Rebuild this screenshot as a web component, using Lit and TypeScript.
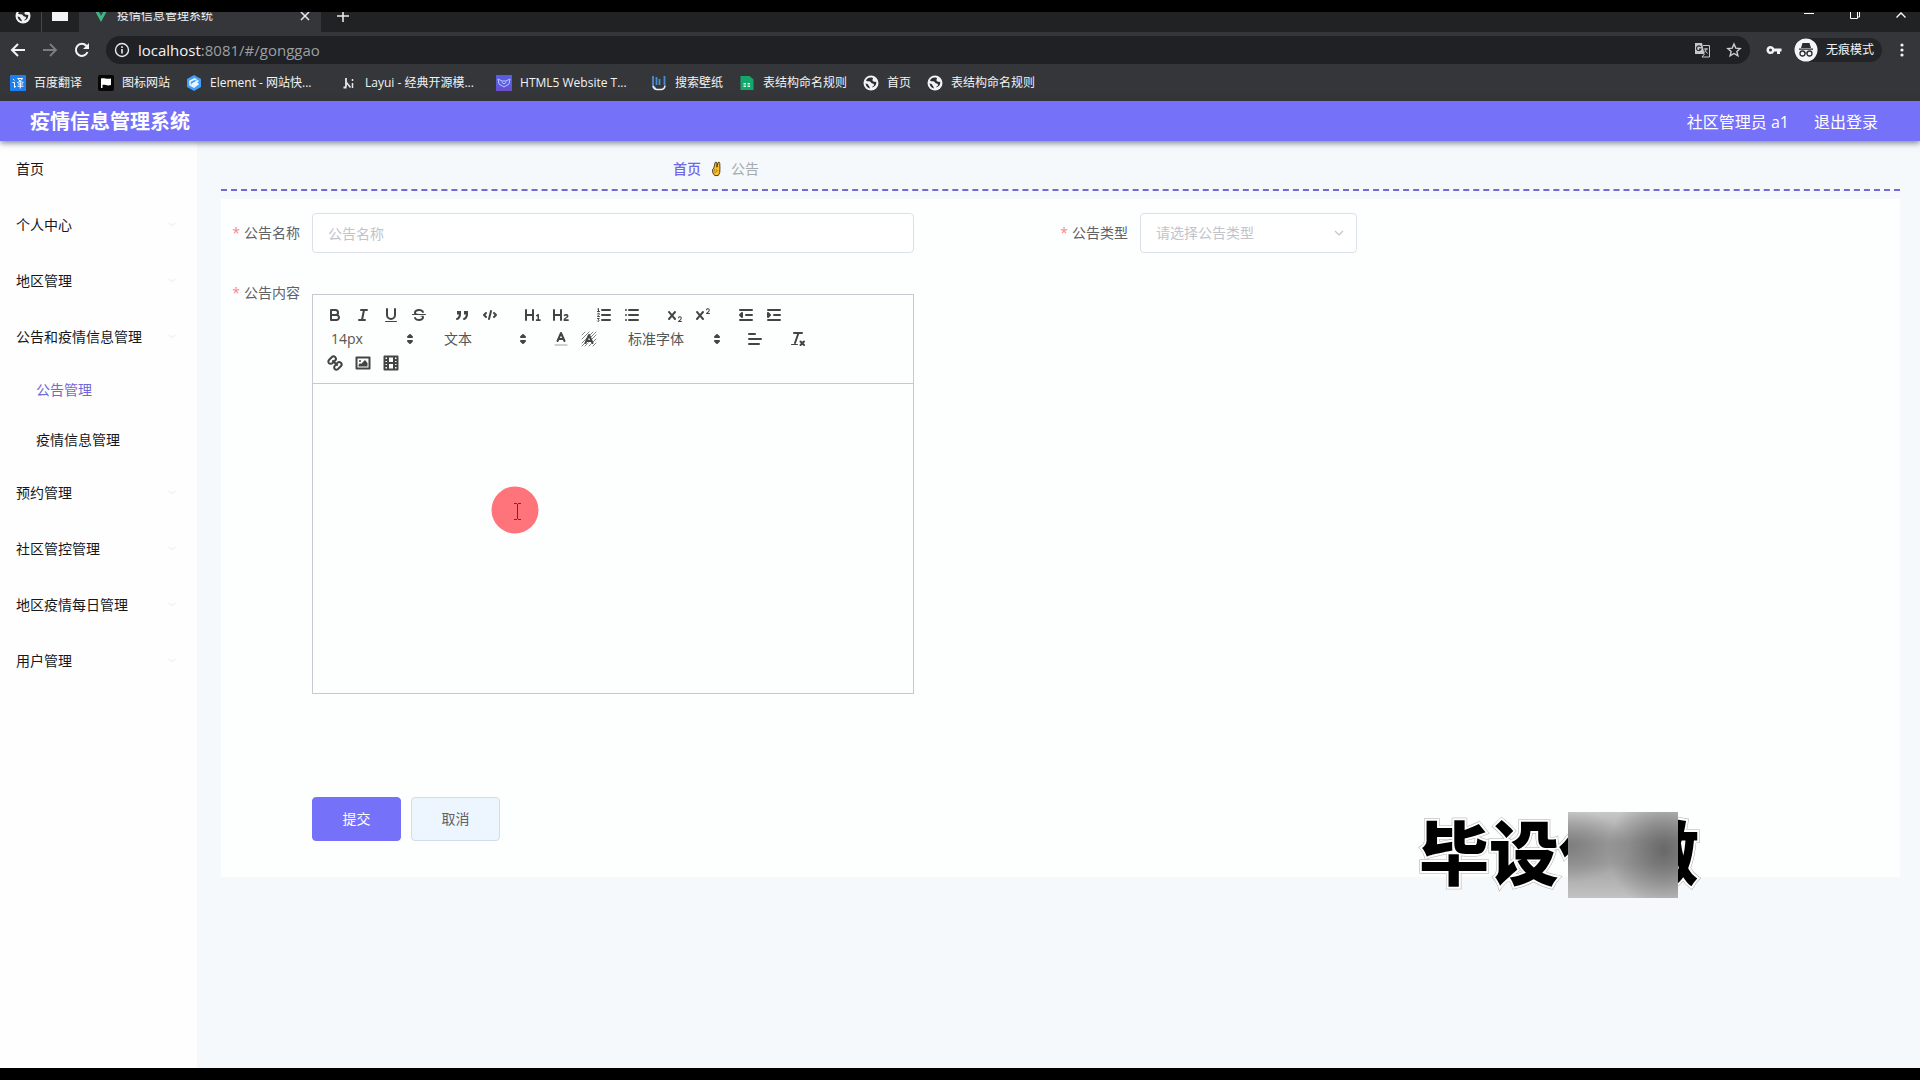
import { LitElement, html, svg, css, nothing } from "lit";
import { customElement, property } from "lit/decorators.js";

const glyphs: Record<string, unknown> = {
  bold: svg`<path class="s" d="M5,4H9.5A2.5,2.5,0,0,1,12,6.5v0A2.5,2.5,0,0,1,9.5,9H5A0,0,0,0,1,5,9V4Z"/><path class="s" d="M5,9h5.5A2.5,2.5,0,0,1,13,11.5v0A2.5,2.5,0,0,1,10.5,14H5V9Z"/>`,
  italic: svg`<path class="s" d="M7,4H13M5,14H11M8,14L10,4"/>`,
  underline: svg`<path class="s" d="M5,3V9a4.012,4.012,0,0,0,4,4H9a4.012,4.012,0,0,0,4-4V3"/><rect class="f" height="1" rx="0.5" width="12" x="3" y="15"/>`,
  strike: svg`<path class="s t" d="M15.5,8.5H2.5"/><path class="f" d="M9.007,8C6.542,7.791,6,7.519,6,6.5,6,5.792,7.283,5,9,5c1.571,0,2.765.679,2.969,1.309a1,1,0,0,0,1.9-.617C13.356,4.106,11.354,3,9,3,6.2,3,4,4.538,4,6.5a3.2,3.2,0,0,0,.5,1.843Z"/><path class="f" d="M8.984,10C11.457,10.208,12,10.479,12,11.5c0,0.708-1.283,1.5-3,1.5-1.571,0-2.765-.679-2.969-1.309a1,1,0,1,0-1.9.617C4.644,13.894,6.646,15,9,15c2.8,0,5-1.538,5-3.5a3.2,3.2,0,0,0-.5-1.843Z"/>`,
  quote: svg`<rect class="f" height="3" width="3" x="4" y="5"/><rect class="f" height="3" width="3" x="11" y="5"/><path class="f s" d="M7,8c0,4.031-3,5-3,5"/><path class="f s" d="M14,8c0,4.031-3,5-3,5"/><path class="f" d="M4,5h4v3.500H4zM11,5h4v3.500h-4z"/>`,
  code: svg`<path class="s" d="M5,7L3,9L5,11M13,7L15,9L13,11M10,5L8,13"/>`,
  h1: svg`<path class="f" d="M10,4V14a1,1,0,0,1-2,0V10H3v4a1,1,0,0,1-2,0V4A1,1,0,0,1,3,4V8H8V4a1,1,0,0,1,2,0Zm6.068,9.209H14.980V8.594a.543.543,0,0,0-.605-.600h-.539a.821.821,0,0,0-.550.200l-1.122.935a.547.547,0,0,0-.011.847l.319.340a.547.547,0,0,0,.847.011l.200-.200V13.209H12.450a.544.544,0,0,0-.605.605v.583a.544.544,0,0,0,.605.600h3.618a.544.544,0,0,0,.605-.600v-.583A.544.544,0,0,0,16.068,13.209Z"/>`,
  h2: svg`<path class="f" d="M16.740,13.814v.583a.544.544,0,0,1-.605.600H12.132c-.429,0-.627-.231-.627-.693,0-2.640,3.190-2.881,3.190-4.047a.721.721,0,0,0-.800-.715,1.021,1.021,0,0,0-.803.452c-.242.308-.484.352-.847.066l-.363-.286c-.352-.264-.407-.517-.100-.869A2.724,2.724,0,0,1,14.058,8a2.043,2.043,0,0,1,2.387,2.046c0,1.882-2.816,2.256-2.937,3.168h2.629A.544.544,0,0,1,16.740,13.814ZM9,3A.99974.99974,0,0,0,8,4V8H3V4A1,1,0,0,0,1,4V14a1,1,0,0,0,2,0V10H8v4a1,1,0,0,0,2,0V4A.99974.99974,0,0,0,9,3Z"/>`,
  ol: svg`<path class="s" d="M7,4H15M7,9H15M7,14H15"/><path class="s t" d="M2.500,5.500H4.500M3.500,5.500V2.500L2.700,3"/><path class="s t" d="M2.500,8a1,.8,0,0,1,2,0c0,1-2,1.300-2,2.500h2"/><path class="s t" d="M2.500,12.500h1.800l-1,1.200a.9.900,0,1,1-1,1.300"/>`,
  ul: svg`<path class="s" d="M6,4H15M6,9H15M6,14H15M3,4H3M3,9H3M3,14H3"/>`,
  sub: svg`<path class="f" d="M15.500,15H13.861a3.858,3.858,0,0,0,1.914-2.975,1.800,1.800,0,0,0-1.600-1.751A1.921,1.921,0,0,0,12.021,11.700a.50013.500,0,1,0,.957.291.914.914,0,0,1,1.053-.725.810.810,0,0,1,.744.762c0,1.076-1.169,1.867-1.920,2.410A1.457,1.457,0,0,0,12,15.500a.5.500,0,0,0,.5.500h3a.5.500,0,0,0,0-1Z"/><path class="f" d="M9.650,5.241a1,1,0,0,0-1.409.108L6,7.964,3.759,5.349A1,1,0,0,0,2.192,6.591L4.683,9.500,2.241,12.349A1,1,0,0,0,3.759,13.651L6,11.036,8.241,13.651a1,1,0,1,0,1.518-1.300L7.317,9.500,9.759,6.651A1,1,0,0,0,9.650,5.241Z"/>`,
  sup: svg`<path class="f" d="M15.500,7H13.861a3.858,3.858,0,0,0,1.914-2.975,1.800,1.800,0,0,0-1.600-1.751A1.921,1.921,0,0,0,12.021,3.700a.5.500,0,1,0,.957.291.917.917,0,0,1,1.053-.725.810.810,0,0,1,.744.762c0,1.077-1.164,1.925-1.934,2.486A1.423,1.423,0,0,0,12,7.500a.5.500,0,0,0,.5.500h3a.5.500,0,0,0,0-1Z"/><path class="f" d="M9.650,5.241a1,1,0,0,0-1.409.108L6,7.964,3.759,5.349A1,1,0,0,0,2.192,6.591L4.683,9.500,2.241,12.349A1,1,0,0,0,3.759,13.651L6,11.036,8.241,13.651a1,1,0,1,0,1.518-1.300L7.317,9.500,9.759,6.651A1,1,0,0,0,9.650,5.241Z"/>`,
  outdent: svg`<path class="s" d="M3,14H15M3,4H15M9,9H15"/><path class="f s" d="M5,7V11L3,9Z"/>`,
  indent: svg`<path class="s" d="M3,14H15M3,4H15M9,9H15"/><path class="f s" d="M3,7V11L5,9Z"/>`,
  color: svg`<path class="s t" opacity=".5" d="M3,15H15"/><path class="s" d="M5.500,11L9,3L12.500,11M11.630,9H6.380"/>`,
  background: svg`<path class="s t" d="M2,5L5,2M2,9L9,2M2,13L13,2M2,16L16,2M5,16L16,5M9,16L16,9M13,16L16,13" opacity=".65"/><path d="M5,13.500L9,4.500L13,13.500Z" fill="#fff" opacity=".5"/><path class="s" d="M5.500,13L9,5L12.500,13M11.630,11H6.380"/>`,
  align: svg`<path class="s" d="M3,9H15M3,14H13M3,4H9"/>`,
  clean: svg`<path class="s" d="M5,3H13M6,13L9.500,3M11.500,11.500L15,15M15,11.500L11.500,15"/><rect class="f" height="1" rx=".5" width="7" x="2" y="14"/>`,
  link: svg`<g transform="rotate(90 9 9)"><path class="s" d="M7,11L11,7"/><path class="s" d="M8.900,11.440a2.476,2.476,0,0,1,.36,3.540,2.476,2.476,0,0,1-3.540-.15L3.200,12.300a2.500,2.500,0,0,1-.1-3.500,2.500,2.500,0,0,1,3.500.1Z"/><path class="s" d="M11.440,8.900a2.476,2.476,0,0,0,3.540.36,2.476,2.476,0,0,0-.15-3.540L12.300,3.200a2.500,2.500,0,0,0-3.500-.1,2.500,2.500,0,0,0,.1,3.500Z"/></g>`,
  image: svg`<rect class="s" height="11" width="13" x="2.500" y="3.500"/><circle class="f" cx="6" cy="7" r="1"/><path class="f" d="M4.500,12.500V11L6,9L7,10L11,6L13.500,9V12.500Z"/>`,
  video: svg`<rect class="s" height="13" width="13" x="2.500" y="2.500"/><path class="s" d="M6,3V15M12,3V15M6,9H12"/><path class="s" d="M3,6H5M3,9H5M3,12H5M13,6H15M13,9H15M13,12H15" stroke-width="1"/>`,
  sort: svg`<path class="f s" d="M7,11L9,13L11,11ZM7,7L9,5L11,7Z"/>`,
};

const globe = svg`<circle cx="8" cy="8" r="7.500" fill="#f1f3f4"/><path fill="#2c2d30" d="M3 5.500C5 7 7.500 6 8 7.500s2.500.5 3 2-1.500 1.500-2 3c2.500-.5 4.500-2.500 4.300-5.500C11.500 6.500 10 7 9.500 5.500S11 4 9.500 2.700C6.500 2 4 3 3 5.500ZM2.500 8.500c.5 2.500 2 4.300 4.300 4.900C7 11.500 5.500 11 5 9.500 4.300 8.500 3.500 8.800 2.500 8.500Z"/>`;

const favicons: Record<string, unknown> = {
  globe,
  translate: svg`<rect width="16" height="16" rx="1" fill="#1e7ff0"/><path d="M3 4l1.500 1.500M2.500 7.500h2v5l1.500-1.300M7.500 3.500h5c-1 2-3 3.500-5.300 4M8 3.500c1 2 3 3.500 5.500 4M10.300 7v6.500M8 9h5M7.500 11.200h6" stroke="#fff" fill="none"/>`,
  flag: svg`<rect width="16" height="16" rx="2" fill="#070707"/><path d="M3 13V3.500c3-1 5 1 10 0v6.500c-4 1.300-6-.7-8.500 0v3Z" fill="#fff"/>`,
  element: svg`<path d="M8 0l7 4v8l-7 4-7-4V4Z" fill="#409eff"/><path d="M12.500 5.500L6.500 9v1.500l5-3M12.500 8.500L8 12 4 9.700V6.300L8.500 4l2 1" stroke="#e9f5ff" stroke-width="1.600" fill="none"/>`,
  layui: svg`<path d="M5 3v8.500M2.500 12.500h3" stroke="#e8e8e8" stroke-width="1.800" fill="none"/><path d="M5.500 7.500l4 5M11.500 8v5M11.500 4v2" stroke="#e8e8e8" stroke-width="1.500"/>`,
  html5: svg`<rect width="16" height="16" fill="#5a5be0"/><path d="M0 12h16v4H0Z" fill="#6d50cf"/><path d="M2 4l4 2h4l4-2-1 5-5 3-5-3ZM5.500 7l2.500 2 2.500-2" fill="none" stroke="#c0c8ff"/>`,
  wallpaper: svg`<path d="M2 1v9a3 3 0 0 0 3 3M5.500 2v8M8.500 4v6M13.500 1v9" stroke="#4c8dd0" stroke-width="1.800" fill="none"/><path d="M2 11q1 3.500 4 3.500h4q3.500 0 4-4" stroke="#e9f3ff" stroke-width="1.600" fill="none"/>`,
  sheet: svg`<path d="M1.500 1h9l4 3.500V15h-13Z" fill="#14a76c"/><path d="M4.500 8h2.500v1.500H4.500ZM8.500 8H11v1.500H8.500ZM4.500 10.500h2.500V12H4.500ZM8.500 10.500H11V12H8.500Z" fill="#d6f5e6"/>`,
};

@customElement("browser-chrome")
export class BrowserChrome extends LitElement {
  static styles = css`
    :host { display: block; background: #353639; color: #f1f3f4; font: 12px/16px "Open Sans", "Noto Sans CJK SC", sans-serif; }
    svg { display: block; flex: none; }
    button { display: block; border: 0; padding: 0; margin: 0; background: none; color: inherit; }
    .strip { display: flex; height: 20px; background: #212224; overflow: hidden; }
    .strip > * { box-sizing: border-box; height: 20px; padding-bottom: 12px; display: flex; align-items: center; }
    .pins { width: 79px; padding-left: 15px; gap: 10px; }
    .bar { width: 1px; height: 40px; background: #46474a; }
    .tab { width: 242px; padding-left: 14px; padding-right: 10px; gap: 8px; background: #353639; }
    .tab-title { flex: 1; }
    .new { padding-left: 16px; }
    .win { margin-left: auto; padding-right: 12px; gap: 32px; }
    .tools { display: flex; align-items: center; height: 36px; padding: 0 10px; }
    .nav { display: flex; gap: 16px; width: 96px; }
    .omni { flex: 1; display: flex; align-items: center; height: 28px; border-radius: 14px; background: #202124; padding: 0 8px; gap: 8px; }
    .url { flex: 1; font-size: 15px; line-height: 20px; color: #9aa0a6; outline: none; }
    .host { color: #f1f3f4; }
    .omni .star { margin: 0 0 0 8px; }
    .key { margin: 0 12px 0 16px; }
    .incog { display: flex; align-items: center; gap: 8px; height: 24px; border-radius: 12px; background: #232427; padding-right: 8px; }
    .dots { margin-left: 12px; }
    .marks { display: flex; gap: 16px; height: 33px; padding: 0 10px 4px; box-sizing: border-box; align-items: center; }
    .mark { display: flex; align-items: center; gap: 8px; color: inherit; text-decoration: none; white-space: nowrap; }
    .cut { width: 115px; }
  `;

  private marks: [string, string, boolean][] = [
    ["translate", "百度翻译", false],
    ["flag", "图标网站", false],
    ["element", "Element - 网站快...", true],
    ["layui", "Layui - 经典开源模...", true],
    ["html5", "HTML5 Website T...", true],
    ["wallpaper", "搜索壁纸", false],
    ["sheet", "表结构命名规则", false],
    ["globe", "首页", false],
    ["globe", "表结构命名规则", false],
  ];

  render() {
    return html`
      <div class="strip">
        <div class="pins">
          <svg width="16" height="16" viewBox="0 0 16 16">${globe}</svg>
          <span class="bar"></span>
          <svg width="16" height="16" viewBox="0 0 16 16"><path d="M0 1h16v12H0Z" fill="#f4f4f4"/></svg>
        </div>
        <div class="tab">
          <svg width="16" height="16" viewBox="0 0 16 16"><path d="M1 1h4l3 5 3-5h4L8 14Z" fill="#41b883"/><path d="M4 1h2.500L8 3.500 9.500 1H12L8 8Z" fill="#34495e"/></svg>
          <span class="tab-title">疫情信息管理系统</span>
          <button aria-label="关闭标签页"><svg width="12" height="12" viewBox="0 0 12 12"><path d="M2 2l8 8M10 2l-8 8" stroke="#e8eaed" stroke-width="1.500"/></svg></button>
        </div>
        <div class="new"><button aria-label="新标签页"><svg width="12" height="12" viewBox="0 0 12 12"><path d="M6 0v12M0 6h12" stroke="#e8eaed" stroke-width="1.600"/></svg></button></div>
        <div class="win">
          <button aria-label="最小化"><svg width="14" height="14" viewBox="0 0 14 14"><path d="M2 4.500h10" stroke="#fff"/></svg></button>
          <button aria-label="还原"><svg width="14" height="14" viewBox="0 0 14 14"><path d="M2.500 2.500h7v7h-7ZM5 .5h6.500V8h-2" stroke="#fff" fill="none"/></svg></button>
          <button aria-label="关闭"><svg width="14" height="14" viewBox="0 0 14 14"><path d="M2.500 8.500L7 4l4.500 4.500" stroke="#fff" stroke-width="1.300" fill="none"/></svg></button>
        </div>
      </div>
      <div class="tools">
        <div class="nav">
          <button aria-label="后退"><svg width="16" height="16" viewBox="0 0 16 16"><path d="M15 8H2M8 2L2 8l6 6" stroke="#f1f3f4" stroke-width="2" fill="none"/></svg></button>
          <button aria-label="前进"><svg width="16" height="16" viewBox="0 0 16 16"><path d="M1 8h13M8 2l6 6-6 6" stroke="#7b7d80" stroke-width="1.800" fill="none"/></svg></button>
          <button aria-label="重新加载"><svg width="16" height="16" viewBox="0 0 16 16"><path d="M13.500 10A6 6 0 1 1 12.300 3.800L14 5.500" stroke="#f1f3f4" stroke-width="2" fill="none"/><path d="M15 1v6H9Z" fill="#f1f3f4"/></svg></button>
        </div>
        <div class="omni">
          <svg width="16" height="16" viewBox="0 0 16 16"><circle cx="8" cy="8" r="6.500" fill="none" stroke="#e8eaed" stroke-width="1.400"/><path d="M8 7v4.500M8 4.300V6" stroke="#e8eaed" stroke-width="1.600"/></svg>
          <span class="url" role="textbox" aria-label="地址栏" contenteditable="true"><span class="host">localhost</span>:8081/#/gonggao</span>
          <svg width="16" height="16" viewBox="0 0 16 16"><path d="M1 1h7l2.500 11H1Z" fill="#c6c8ca"/><path d="M9 3.500h6.500V15H8l2.500-3" fill="none" stroke="#c6c8ca"/><path d="M6.800 5A2.300 2.300 0 1 0 7 7H5" stroke="#26272a" stroke-width="1.200" fill="none"/><path d="M10 7h4M12 6v1c0 2-1 3-2.500 4M11 8.500l2.500 3" stroke="#c6c8ca" fill="none"/></svg>
          <button class="star" aria-label="加入书签"><svg width="16" height="16" viewBox="0 0 18 18"><path d="M9 2.200l2 4.700 5 .4-3.800 3.300 1.200 5L9 12.900l-4.400 2.700 1.200-5L2 7.300l5-.4Z" fill="none" stroke="#d0d2d4" stroke-width="1.500"/></svg></button>
        </div>
        <svg class="key" width="16" height="16" viewBox="0 0 16 16"><path fill-rule="evenodd" d="M4.500 4a4 4 0 0 1 3.800 2.600H15.500V9.400H14V12h-3V9.400H8.300A4 4 0 1 1 4.500 4Zm0 2.500a1.500 1.500 0 1 0 0 3 1.500 1.500 0 0 0 0-3Z" fill="#f1f3f4"/></svg>
        <div class="incog">
          <svg width="24" height="24" viewBox="0 0 24 24"><circle cx="12" cy="12" r="11.500" fill="#f4f5f6"/><path d="M8.500 5h7l1.500 5H7ZM5 10.500h14v1.300H5Z" fill="#2b2c2f"/><circle cx="8.500" cy="15.500" r="2.500" fill="none" stroke="#2b2c2f" stroke-width="1.300"/><circle cx="15.500" cy="15.500" r="2.500" fill="none" stroke="#2b2c2f" stroke-width="1.300"/><path d="M11 15h2" stroke="#2b2c2f"/></svg>
          <span>无痕模式</span>
        </div>
        <button class="dots" aria-label="菜单"><svg width="16" height="16" viewBox="0 0 16 16"><g fill="#f1f3f4"><circle cx="8" cy="3" r="1.600"/><circle cx="8" cy="8" r="1.600"/><circle cx="8" cy="13" r="1.600"/></g></svg></button>
      </div>
      <nav class="marks">
        ${this.marks.map(([icon, text, cut]) => html`<a class="mark" href="#"><svg width="16" height="16" viewBox="0 0 16 16">${favicons[icon]}</svg><span class=${cut ? "cut" : ""}>${text}</span></a>`)}
      </nav>`;
  }
}

@customElement("side-menu")
export class SideMenu extends LitElement {
  static styles = css`
    :host { display: block; width: 197px; flex: none; background: #fefeff; font: 14px/20px "Open Sans", "Noto Sans CJK SC", sans-serif; }
    a { display: flex; align-items: center; justify-content: space-between; height: 56px; padding: 0 20px 0 16px; color: #16171a; text-decoration: none; white-space: nowrap; }
    .sub { height: 50px; padding-left: 36px; }
    .on { color: #6f68d8; }
  `;
  private items: [string, string][] = [
    ["首页", "plain"], ["个人中心", "group"], ["地区管理", "group"], ["公告和疫情信息管理", "group"],
    ["公告管理", "sub on"], ["疫情信息管理", "sub"],
    ["预约管理", "group"], ["社区管控管理", "group"], ["地区疫情每日管理", "group"], ["用户管理", "group"],
  ];
  render() {
    return html`<nav>${this.items.map(([text, kind]) => html`<a class=${kind} href="#"><span>${text}</span>${kind === "group"
      ? html`<svg width="10" height="10" viewBox="0 0 10 10"><path d="M1.500 3L5 5.500 8.500 3" fill="none" stroke="#ecebf3"/></svg>` : nothing}</a>`)}</nav>`;
  }
}

@customElement("rich-editor")
export class RichEditor extends LitElement {
  static styles = css`
    :host { display: block; position: relative; border: 1px solid #c9c8d0; }
    svg { display: block; width: 18px; height: 18px; }
    .s { fill: none; stroke: #444; stroke-width: 2; stroke-linecap: round; stroke-linejoin: round; }
    .t { stroke-width: 1; }
    .f { fill: #444; }
    .toolbar { display: flex; flex-wrap: wrap; padding: 8px; column-gap: 15px; border-bottom: 1px solid #c9c8d0; }
    .group { display: flex; height: 24px; }
    button { border: 0; background: none; width: 28px; height: 24px; padding: 3px 5px; }
    .pick { display: grid; align-items: center; width: 98px; }
    .pick.font { width: 108px; }
    .pick > * { grid-area: 1 / 1; }
    .pick svg { justify-self: end; pointer-events: none; }
    select { appearance: none; border: 0; background: none; width: 100%; height: 24px; padding: 0 18px 0 10px; font: 14px/24px "Open Sans", "Noto Sans CJK SC", sans-serif; color: #555; }
    .break { flex-basis: 100%; height: 0; }
    textarea { display: block; box-sizing: border-box; width: 100%; height: 309px; padding: 12px 15px; border: 0; background: none; resize: none; outline: none; font: 14px/20px "Open Sans", "Noto Sans CJK SC", sans-serif; }
    .pointer { position: absolute; left: 178px; top: 191px; width: 48px; height: 48px; pointer-events: none; }
  `;
  private btn(name: string) {
    return html`<button type="button" aria-label=${name}><svg viewBox="0 0 18 18">${glyphs[name]}</svg></button>`;
  }
  private group(...names: string[]) {
    return html`<div class="group">${names.map((n) => this.btn(n))}</div>`;
  }
  private pick(label: string, value: string, kind = "") {
    return html`<div class="group"><span class="pick ${kind}"><select aria-label=${label}><option>${value}</option></select><svg viewBox="0 0 18 18">${glyphs.sort}</svg></span></div>`;
  }
  render() {
    return html`
      <div class="toolbar">
        ${this.group("bold", "italic", "underline", "strike")}
        ${this.group("quote", "code")}
        ${this.group("h1", "h2")}
        ${this.group("ol", "ul")}
        ${this.group("sub", "sup")}
        ${this.group("outdent", "indent")}
        <span class="break"></span>
        ${this.pick("字号", "14px")}
        ${this.pick("标题", "文本")}
        ${this.group("color", "background")}
        ${this.pick("字体", "标准字体", "font")}
        ${this.group("align")}
        ${this.group("clean")}
        <span class="break"></span>
        ${this.group("link", "image", "video")}
      </div>
      <textarea aria-label="公告内容"></textarea>
      <svg class="pointer" viewBox="0 0 48 48"><circle cx="24" cy="24" r="23.500" fill="#ff747b"/><path d="M23 17.500h3M27 17.500h3M26.500 18v15M23 33.500h3M27 33.500h3" stroke="#6d2a30" fill="none"/></svg>`;
  }
}

@customElement("form-row")
export class FormRow extends LitElement {
  static styles = css`
    :host { display: flex; align-items: flex-start; }
    .label { flex: none; width: 80px; box-sizing: border-box; padding-right: 12px; text-align: right; font-size: 14px; line-height: 40px; color: #606266; white-space: nowrap; }
    .req { color: #f78989; margin-right: 4px; }
    .body { flex: 1; min-width: 0; }
  `;
  @property() label = "";
  render() {
    return html`<span class="label"><span class="req">*</span>${this.label}</span><div class="body"><slot></slot></div>`;
  }
}

@customElement("app-root")
export class AppRoot extends LitElement {
  static styles = css`
    :host { display: flex; flex-direction: column; min-height: 100vh; box-sizing: border-box; padding: 12px 0; background: #000; font: 14px/20px "Open Sans", "Noto Sans CJK SC", sans-serif; }
    .top { display: flex; align-items: center; height: 40px; padding: 2px 42px 0 30px; box-sizing: border-box; background: #7571f9; color: #fff; box-shadow: 0 2px 6px rgba(40, 50, 80, 0.6); position: relative; z-index: 1; }
    .brand { margin: 0 auto 0 0; font-size: 20px; line-height: 28px; font-weight: 700; }
    .user { display: flex; gap: 25px; font-size: 16px; line-height: 24px; }
    .user a { color: inherit; text-decoration: none; }
    .shell { flex: 1; display: flex; background: #f5f9fb; }
    main { flex: 1; min-width: 0; padding: 0 20px 0 24px; }
    .crumbs { display: grid; grid-template-columns: 452fr 1227fr; padding: 16px 0 8px; align-items: center; border-bottom: 2px dashed #7468d2; height: 24px; }
    .trail { grid-column: 2; display: flex; align-items: center; gap: 8px; }
    .trail a { color: #7166ea; text-decoration: none; font-weight: 500; }
    .trail .here { color: #a6a9ad; }
    .card { position: relative; margin-top: 8px; padding: 14px 12px 36px 11px; background: #fdfefe; }
    .grid { display: grid; grid-template-columns: 1fr 1fr; row-gap: 20px; }
    .wide { padding-right: 146px; }
    .input { display: block; box-sizing: border-box; width: 100%; height: 40px; padding: 0 15px; border: 1px solid #dcdfe9; border-radius: 4px; background: #fff; font: inherit; color: #606266; }
    .input::placeholder { color: #c0c4cc; }
    .pick { display: grid; align-items: center; width: 217px; }
    .pick > * { grid-area: 1 / 1; }
    .pick .input { appearance: none; color: #c0c4cc; }
    .pick svg { justify-self: end; margin-right: 12px; pointer-events: none; }
    .editor { display: block; margin-top: 21px; }
    .actions { display: flex; gap: 10px; padding: 103px 0 0 80px; }
    .btn { width: 89px; height: 44px; border-radius: 4px; font: inherit; border: 1px solid #7571f9; background: #7571f9; color: #fff; }
    .btn.ghost { border-color: #d3dcea; background: #edf5fe; color: #606266; }
    .stamp { position: absolute; right: 200px; bottom: -21px; width: 281px; height: 86px; pointer-events: none; }
    .stamp svg { display: block; width: 281px; height: 86px; overflow: visible; }
    .stamp text { font: 900 70px "Noto Sans CJK SC", sans-serif; }
    .halo { fill: none; stroke: #a9abae; stroke-width: 5px; stroke-linejoin: miter; }
    .rim { fill: none; stroke: #fff; stroke-width: 4px; }
    .frost { position: absolute; left: 149px; top: 0; width: 110px; height: 86px; background:
      radial-gradient(ellipse 56px 60px at 96px 38px, rgba(90, 90, 90, 0.8), rgba(90, 90, 90, 0)),
      radial-gradient(ellipse 60px 36px at 0 34px, rgba(110, 110, 110, 0.7), rgba(110, 110, 110, 0)),
      linear-gradient(#c8c8c8, #a0a0a0 35%, #a2a2a2 60%, #c2c2c2); }
  `;

  render() {
    return html`
      <browser-chrome></browser-chrome>
      <header class="top">
        <h1 class="brand">疫情信息管理系统</h1>
        <div class="user"><span>社区管理员 a1</span><a href="#">退出登录</a></div>
      </header>
      <div class="shell">
        <side-menu></side-menu>
        <main>
          <nav class="crumbs">
            <div class="trail">
              <a href="#">首页</a>
              <svg width="14" height="18" viewBox="0 0 16 18"><path d="M5.500 8L7 1.500Q8.200.5 9 2L9 7 10.300 1.500Q12 .5 12.300 2.500L12.500 8.500Q13 14 10.500 16.500H6.500Q3.500 14 4 9.500Z" fill="#fbc02d" stroke="#3d2c12"/><path d="M6 8.500v3M8.200 9v2.500M5.500 12.500q3 1.500 4.500-2" stroke="#b57a12" fill="none"/></svg>
              <span class="here">公告</span>
            </div>
          </nav>
          <form class="card" @submit=${(e: Event) => e.preventDefault()}>
            <div class="grid">
              <form-row class="wide" label="公告名称"><input class="input" aria-label="公告名称" placeholder="公告名称" /></form-row>
              <form-row label="公告类型"><span class="pick">
                <select class="input" aria-label="公告类型"><option>请选择公告类型</option></select>
                <svg width="12" height="12" viewBox="0 0 12 12"><path d="M2 4l4 4 4-4" fill="none" stroke="#c0c4cc" stroke-width="1.200"/></svg>
              </span></form-row>
              <form-row class="wide" label="公告内容"><rich-editor class="editor"></rich-editor></form-row>
            </div>
            <div class="actions">
              <button class="btn" type="submit">提交</button>
              <button class="btn ghost" type="button">取消</button>
            </div>
            <div class="stamp">
              <svg viewBox="0 0 281 86"><text class="halo" x="0" y="68">毕设代做</text><text class="rim" x="0" y="68">毕设代做</text><text x="0" y="68">毕设代做</text></svg>
              <span class="frost"></span>
            </div>
          </form>
        </main>
      </div>`;
  }
}
